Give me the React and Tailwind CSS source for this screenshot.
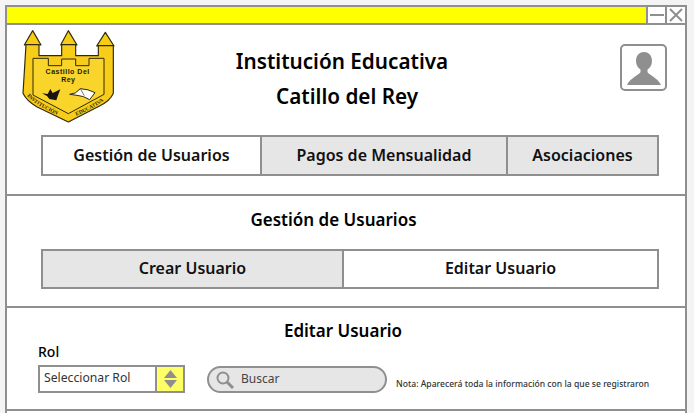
function Logo() {
  const ink = "#2f2a0c";
  return (
    <svg width="105" height="100" viewBox="0 0 315 300" className="shrink-0">
      <path d="M53 17 L28 60 H78 Z M160 17 L137 60 H186 Z M271 22 L245 63 H297 Z" fill="#f6cc16" stroke={ink} strokeWidth="3.5" strokeLinejoin="round" />
      <path d="M33 59 H72 V92 H140 V59 H182 V92 H250 V62 H295 V205 Q285 228 255 242 L160 291 L65 245 Q35 228 24 205 Z" fill="#f7cd1a" stroke={ink} strokeWidth="3.5" strokeLinejoin="round" />
      <path d="M54 100 H100 V122 H140 V102 H182 V122 H222 V100 H267 V208 L160 266 L54 210 Z" fill="#f9d42a" stroke={ink} strokeWidth="3" strokeLinejoin="round" />
      <text x="158" y="147" textAnchor="middle" fontSize="21" fontWeight="700" letterSpacing="1.5" fill="#1f1a08" fontFamily="'Liberation Sans', sans-serif">Castillo Del</text>
      <text x="160" y="170" textAnchor="middle" fontSize="21" fontWeight="700" letterSpacing="1.5" fill="#1f1a08" fontFamily="'Liberation Sans', sans-serif">Rey</text>
      <path d="M81 205 L98 207 L106 192 L113 204 L136 193 L128 214 L124 226 L103 222 L96 213 Z" fill="#17150e" />
      <path d="M164 208 Q182 208 196 191 Q220 192 240 203 L224 224 Q205 212 186 211 Z" fill="#fff" stroke={ink} strokeWidth="3" strokeLinejoin="round" />
      <path d="M196 191 L208 212" stroke={ink} strokeWidth="2" />
      <path id="lb" d="M36 212 Q60 240 130 272" fill="none" />
      <path id="rb" d="M184 272 Q260 240 290 205" fill="none" />
      <text fontSize="16" fill="#2a240a" fontFamily="'Liberation Serif', serif" fontWeight="700"><textPath href="#lb">INSTITUCIÓN</textPath></text>
      <text fontSize="16" fill="#2a240a" fontFamily="'Liberation Serif', serif" fontWeight="700"><textPath href="#rb">EDUCATIVA</textPath></text>
    </svg>
  );
}

function Avatar() {
  return (
    <div className="w-[47px] h-[47px] border-2 border-[#8f8f8f] rounded-[5px] bg-white flex items-center justify-center">
      <svg width="36" height="36" viewBox="0 0 36 36">
        <path d="M18 2 C12.5 2 10 6.5 10 11 C10 15 12 18 14.5 19.5 L14.5 22 C14 24.5 4 28 1 35 H35 C32 28 22 24.5 21.5 22 L21.5 19.5 C24 18 26 15 26 11 C26 6.5 23.5 2 18 2 Z" fill="#8f8f8f" />
      </svg>
    </div>
  );
}

function Tab({ children, active, className = "" }) {
  return (
    <div className={`flex items-center justify-center h-full pb-[2px] text-[16px] font-semibold text-[#111] ${active ? "bg-white" : "bg-[#e6e6e6]"} ${className}`}>
      {children}
    </div>
  );
}

export default function App() {
  return (
    <div className="w-[694px] h-[413px] overflow-hidden bg-[#f4f4f4] pt-[5px] pl-[5px]" style={{ fontFamily: "'Noto Sans', 'Liberation Sans', sans-serif" }}>
      <div className="w-[682px] h-[420px] border-2 border-[#8f8f8f] bg-white flex flex-col">
        {/* title bar */}
        <div className="flex h-[16px] shrink-0 border-b-2 border-[#8f8f8f] box-content">
          <div className="flex-1 bg-[#ffff00] border-r-2 border-[#8f8f8f]" />
          <div className="w-[19px] flex items-center justify-center border-r-2 border-[#8f8f8f]">
            <div className="w-[14px] h-[2px] bg-[#8f8f8f]" />
          </div>
          <div className="w-[18px] flex items-center justify-center">
            <svg width="14" height="14" viewBox="0 0 14 14"><path d="M1 1 L13 13 M13 1 L1 13" stroke="#8f8f8f" strokeWidth="2" /></svg>
          </div>
        </div>

        {/* header section */}
        <div className="h-[171px] shrink-0 border-b-2 border-[#8f8f8f] px-[34px] flex flex-col">
          <div className="h-[110px] shrink-0 relative flex items-start">
            <div className="-ml-[26px]"><Logo /></div>
            <div className="flex-1 text-center text-[20.7px] font-semibold text-black leading-[35px] mt-[19px] pr-[87px]">
              <div>Institución Educativa</div>
              <div className="pl-[10px]">Catillo del Rey</div>
            </div>
            <div className="shrink-0 absolute right-[-16px] top-[19px]"><Avatar /></div>
          </div>
          <div className="w-[618px] h-[41px] border-2 border-[#8f8f8f] flex">
            <Tab active className="w-[219px] border-r-2 border-[#8f8f8f]">Gestión de Usuarios</Tab>
            <Tab className="w-[246px] border-r-2 border-[#8f8f8f]">Pagos de Mensualidad</Tab>
            <Tab className="flex-1">Asociaciones</Tab>
          </div>
        </div>

        {/* gestion section */}
        <div className="h-[112px] shrink-0 border-b-2 border-[#8f8f8f] px-[34px] flex flex-col">
          <div className="h-[53px] shrink-0 pb-[5px] pr-[25px] flex items-center justify-center text-[17px] font-semibold text-black">Gestión de Usuarios</div>
          <div className="w-[618px] h-[40px] border-2 border-[#8f8f8f] flex">
            <Tab className="w-[301px] border-r-2 border-[#8f8f8f]">Crear Usuario</Tab>
            <Tab active className="flex-1">Editar Usuario</Tab>
          </div>
        </div>

        {/* editar section */}
        <div className="h-[103px] shrink-0 border-b-2 border-[#8f8f8f] flex flex-col">
          <div className="mt-[13px] leading-[20px] pr-[6px] shrink-0 text-center text-[17px] font-semibold text-black">Editar Usuario</div>
          <div className="flex items-end pl-[31px] mt-[3px]">
            <div className="w-[147px] shrink-0">
              <div className="text-[14px] font-medium text-black leading-[17px] mb-[5px] -mt-[1px]">Rol</div>
              <div className="h-[28px] border-2 border-[#8f8f8f] flex">
                <div className="flex-1 flex items-center pl-[4px] pb-[2px] text-[12.2px] text-[#333]">Seleccionar Rol</div>
                <div className="w-[28px] bg-[#ffff66] border-l-2 border-[#8f8f8f] flex items-center justify-center">
                  <svg width="15" height="20" viewBox="0 0 15 20"><path d="M7.5 1 L14 9 H1 Z M1 11 H14 L7.5 19 Z" fill="#8f8f8f" /></svg>
                </div>
              </div>
            </div>
            <div className="ml-[22px] w-[180px] h-[27px] rounded-full border-2 border-[#8f8f8f] bg-[#e6e6e6] flex items-center pl-[6px] text-[12px] text-[#444]">
              <svg width="20" height="20" viewBox="0 0 20 20"><circle cx="8" cy="8" r="5.5" fill="none" stroke="#8f8f8f" strokeWidth="2" /><path d="M12 12 L18 18" stroke="#8f8f8f" strokeWidth="3" /></svg>
              <span className="ml-[6px] pb-[2px]">Buscar</span>
            </div>
            <div className="ml-[9px] mb-[3px] text-[8.6px] font-medium text-[#333] leading-[12px] whitespace-nowrap">Nota: Aparecerá toda la información con la que se registraron</div>
          </div>
        </div>
      </div>
    </div>
  );
}
